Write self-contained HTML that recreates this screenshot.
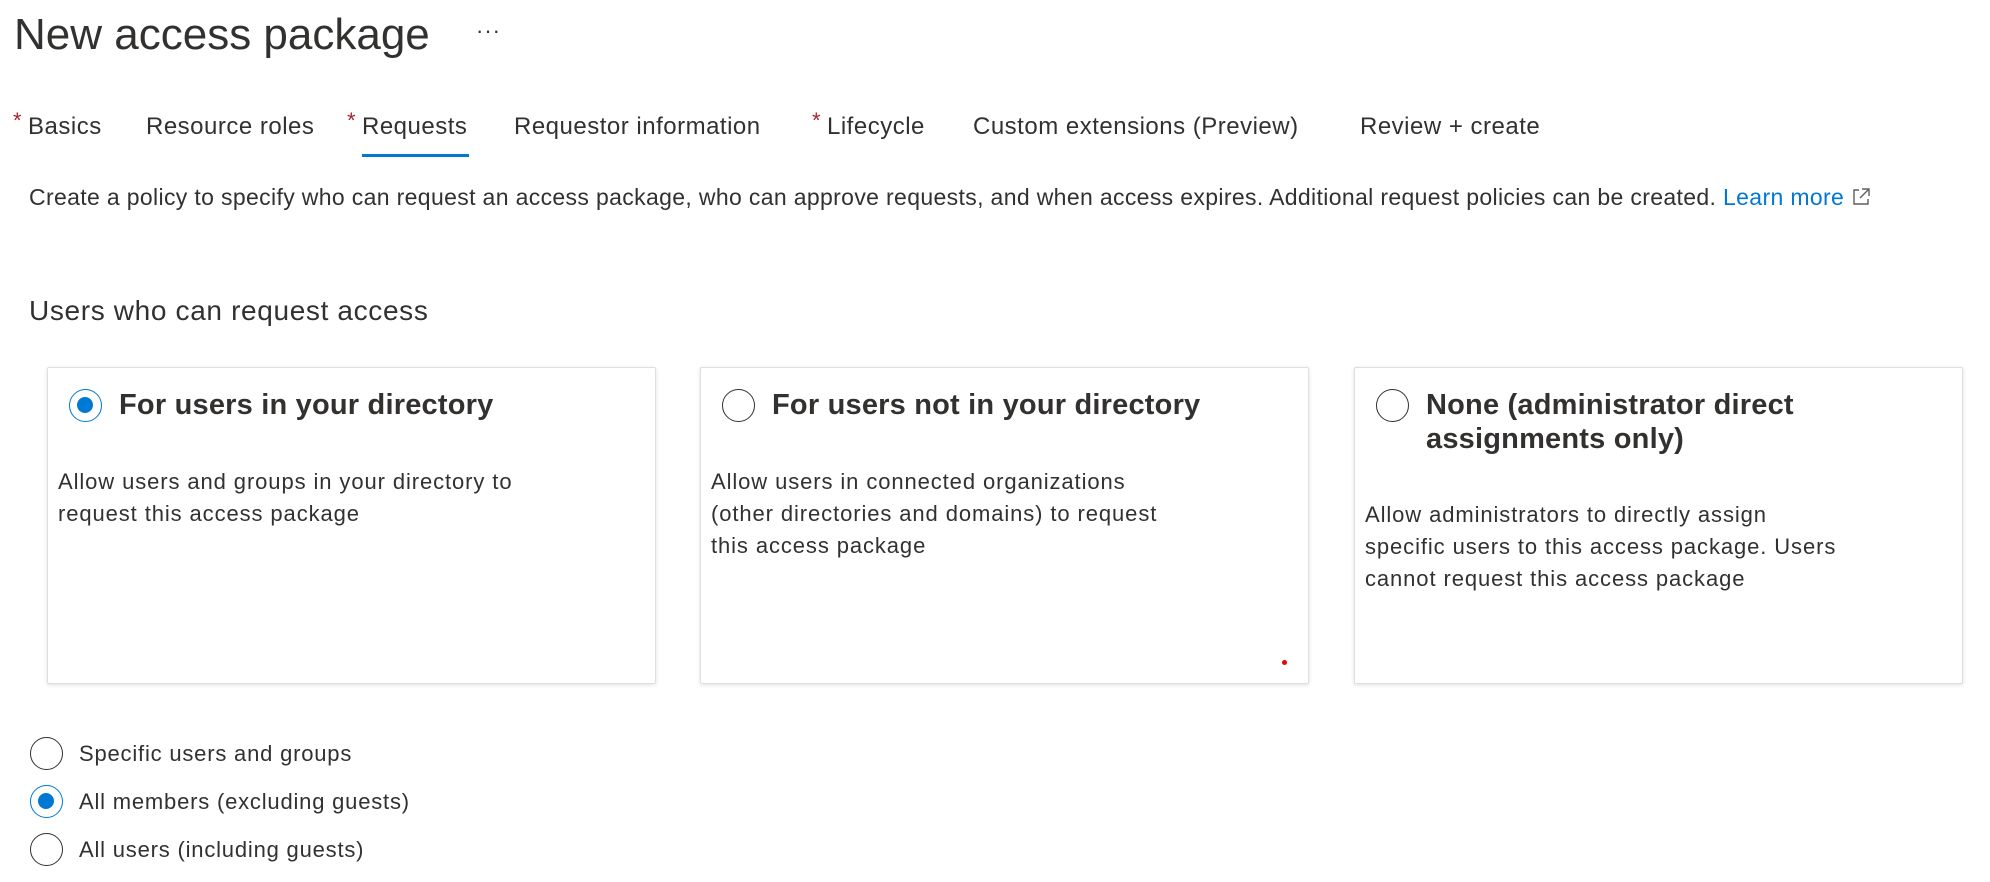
<!DOCTYPE html>
<html><head><meta charset="utf-8"><style>
*{margin:0;padding:0;box-sizing:border-box}
body{width:1990px;height:882px;background:#fff;font-family:"Liberation Sans",sans-serif;color:#323130;position:relative;overflow:hidden}
.a{position:absolute;white-space:nowrap}
.tab{position:absolute;top:112px;font-size:24px;line-height:30px;color:#323130;letter-spacing:0.5px}
.req{color:#a4262c;font-size:22px;position:absolute;top:108px}
.card{position:absolute;top:367px;width:609px;height:317px;border:1px solid #e1dfdd;border-radius:2px;box-shadow:0 1px 4px rgba(0,0,0,.13);background:#fff}
.rad{position:absolute;width:33px;height:33px;border:1.5px solid #323130;border-radius:50%;background:#fff}
.rad.on{border-color:#0078d4}
.rad.on::after{content:"";position:absolute;left:7px;top:7px;width:16px;height:16px;border-radius:50%;background:#0078d4}
.ct{position:absolute;left:71px;top:20px;font-size:29px;font-weight:bold;line-height:34px;color:#323130;letter-spacing:0.2px}
.cb{position:absolute;left:10px;font-size:22px;line-height:32px;color:#323130;letter-spacing:0.9px}
.lab{position:absolute;left:79px;font-size:22px;line-height:30px;letter-spacing:0.8px}
</style></head><body>
<div class="a" style="left:14px;top:6px;font-size:44px;line-height:58px">New access package</div>
<div class="a" style="left:476px;top:18px;font-size:22px;letter-spacing:1px">···</div>

<span class="req" style="left:13px">*</span><span class="tab" style="left:28px">Basics</span>
<span class="tab" style="left:146px">Resource roles</span>
<span class="req" style="left:347px">*</span><span class="tab" style="left:362px">Requests</span>
<div class="a" style="left:362px;top:154px;width:107px;height:3px;background:#0078d4"></div>
<span class="tab" style="left:514px">Requestor information</span>
<span class="req" style="left:812px">*</span><span class="tab" style="left:827px">Lifecycle</span>
<span class="tab" style="left:973px">Custom extensions (Preview)</span>
<span class="tab" style="left:1360px">Review + create</span>

<div class="a" style="left:29px;top:183px;font-size:23px;line-height:29px;letter-spacing:0.35px">Create a policy to specify who can request an access package, who can approve requests, and when access expires. Additional request policies can be created. <span style="color:#0078d4">Learn more</span> <svg width="20" height="20" viewBox="0 0 20 20" style="vertical-align:-2px"><path d="M8 3H3v14h14v-5M11 2h7v7M18 2l-9 9" fill="none" stroke="#605e5c" stroke-width="1.4"/></svg></div>

<div class="a" style="left:29px;top:293px;font-size:28px;line-height:36px;letter-spacing:0.65px">Users who can request access</div>

<div class="card" style="left:47px">
<div class="rad on" style="left:21px;top:21px"></div>
<div class="ct">For users in your directory</div>
<div class="cb" style="top:98px">Allow users and groups in your directory to<br>request this access package</div>
</div>
<div class="card" style="left:700px">
<div class="rad" style="left:21px;top:21px"></div>
<div class="ct">For users not in your directory</div>
<div class="cb" style="top:98px">Allow users in connected organizations<br>(other directories and domains) to request<br>this access package</div>
<div style="position:absolute;left:581px;top:292px;width:5px;height:5px;border-radius:50%;background:#e00"></div>
</div>
<div class="card" style="left:1354px">
<div class="rad" style="left:21px;top:21px"></div>
<div class="ct">None (administrator direct<br>assignments only)</div>
<div class="cb" style="top:131px">Allow administrators to directly assign<br>specific users to this access package. Users<br>cannot request this access package</div>
</div>

<div class="rad" style="left:30px;top:737px"></div><div class="lab" style="top:739px">Specific users and groups</div>
<div class="rad on" style="left:30px;top:785px"></div><div class="lab" style="top:787px">All members (excluding guests)</div>
<div class="rad" style="left:30px;top:833px"></div><div class="lab" style="top:835px">All users (including guests)</div>
</body></html>
